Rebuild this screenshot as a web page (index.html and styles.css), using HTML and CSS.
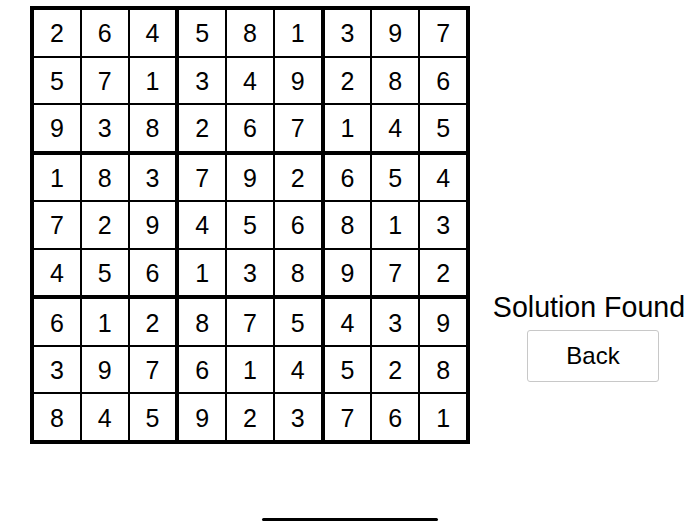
FILE: index.html
```html
<!DOCTYPE html>
<html>
<head>
<meta charset="utf-8">
<link rel="stylesheet" href="styles.css">
</head>
<body>
<div class="screen">
  <div class="main">
    <div class="board" id="board"></div>
    <div class="side">
      <div class="status">Solution Found</div>
      <button class="back">Back</button>
    </div>
  </div>
  <div class="home-indicator"></div>
</div>
<script src="script.js"></script>
</body>
</html>
```
FILE: styles.css
```css
html, body {
  margin: 0;
  padding: 0;
  background: #fff;
}
.screen {
  width: 700px;
  height: 525px;
  display: flex;
  flex-direction: column;
  font-family: "Liberation Sans", Arial, sans-serif;
  color: #000;
}
.main {
  display: flex;
  align-items: flex-start;
  padding: 6px 0 0 30px;
}
.board {
  width: 440px;
  height: 438px;
  box-sizing: border-box;
  background: #000;
  padding: 4px;
  display: grid;
  grid-template-columns: repeat(3, 1fr);
  grid-template-rows: repeat(3, 1fr);
  gap: 4px;
}
.block {
  display: grid;
  grid-template-columns: repeat(3, 1fr);
  grid-template-rows: repeat(3, 1fr);
  gap: 2px;
}
.cell {
  background: #fff;
  display: flex;
  align-items: center;
  justify-content: center;
  font-size: 25px;
  line-height: 1;
  padding-top: 2px;
}
.side {
  flex: 1;
  display: flex;
  flex-direction: column;
  align-items: center;
  padding-left: 8px;
  margin-top: 285px;
}
.status {
  font-size: 28.6px;
  line-height: 32px;
  white-space: nowrap;
}
.back {
  margin-top: 7px;
  margin-left: 8px;
  width: 132px;
  height: 52px;
  background: #fff;
  border: 1px solid #c8c8c8;
  border-radius: 3px;
  font-family: "Liberation Sans", Arial, sans-serif;
  font-size: 24px;
  color: #000;
  padding: 0;
}
.home-indicator {
  margin: auto auto 4px;
  width: 176px;
  height: 3px;
  border-radius: 2px;
  background: #000;
}
```
FILE: script.js
```js
var rows = [
  "264581397",
  "571349286",
  "938267145",
  "183792654",
  "729456813",
  "456138972",
  "612875439",
  "397614528",
  "845923761"
];
var board = document.getElementById("board");
for (var b = 0; b < 9; b++) {
  var block = document.createElement("div");
  block.className = "block";
  var br = Math.floor(b / 3) * 3, bc = (b % 3) * 3;
  for (var i = 0; i < 9; i++) {
    var r = br + Math.floor(i / 3), c = bc + (i % 3);
    var cell = document.createElement("div");
    cell.className = "cell";
    cell.textContent = rows[r][c];
    block.appendChild(cell);
  }
  board.appendChild(block);
}
```
